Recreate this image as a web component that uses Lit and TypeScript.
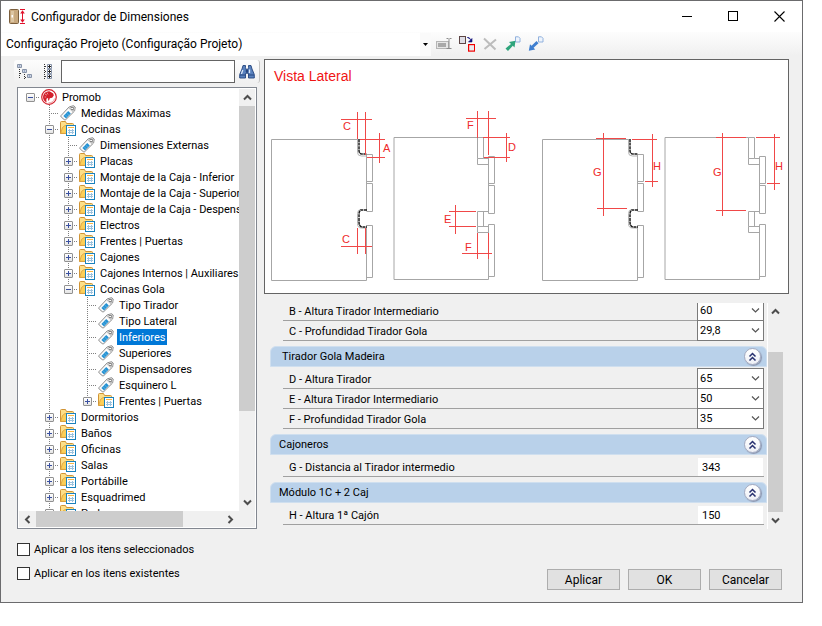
import { LitElement, html, css, svg, nothing } from "lit";
import { customElement, property } from "lit/decorators.js";
import { classMap } from "lit/directives/class-map.js";

interface Node {
  text: string;
  icon: "root" | "tag" | "folder";
  level: number;
  open?: boolean;
  guides: string;
  selected?: boolean;
}

/* guides: one letter per column. "|" line passes, " " empty, "t" leaf joint,
   "e" last joint, "r" root joint */
const NODES: Node[] = [
  { text: "Promob", icon: "root", level: 0, open: true, guides: "r" },
  { text: "Medidas Máximas", icon: "tag", level: 1, guides: " t" },
  { text: "Cocinas", icon: "folder", level: 1, open: true, guides: " t" },
  { text: "Dimensiones Externas", icon: "tag", level: 2, guides: " |t" },
  { text: "Placas", icon: "folder", level: 2, open: false, guides: " |t" },
  { text: "Montaje de la Caja - Inferior", icon: "folder", level: 2, open: false, guides: " |t" },
  { text: "Montaje de la Caja - Superior", icon: "folder", level: 2, open: false, guides: " |t" },
  { text: "Montaje de la Caja - Despensero", icon: "folder", level: 2, open: false, guides: " |t" },
  { text: "Electros", icon: "folder", level: 2, open: false, guides: " |t" },
  { text: "Frentes | Puertas", icon: "folder", level: 2, open: false, guides: " |t" },
  { text: "Cajones", icon: "folder", level: 2, open: false, guides: " |t" },
  { text: "Cajones Internos | Auxiliares", icon: "folder", level: 2, open: false, guides: " |t" },
  { text: "Cocinas Gola", icon: "folder", level: 2, open: true, guides: " |e" },
  { text: "Tipo Tirador", icon: "tag", level: 3, guides: " | t" },
  { text: "Tipo Lateral", icon: "tag", level: 3, guides: " | t" },
  { text: "Inferiores", icon: "tag", level: 3, guides: " | t", selected: true },
  { text: "Superiores", icon: "tag", level: 3, guides: " | t" },
  { text: "Dispensadores", icon: "tag", level: 3, guides: " | t" },
  { text: "Esquinero L", icon: "tag", level: 3, guides: " | t" },
  { text: "Frentes | Puertas", icon: "folder", level: 3, open: false, guides: " | e" },
  { text: "Dormitorios", icon: "folder", level: 1, open: false, guides: " t" },
  { text: "Baños", icon: "folder", level: 1, open: false, guides: " t" },
  { text: "Oficinas", icon: "folder", level: 1, open: false, guides: " t" },
  { text: "Salas", icon: "folder", level: 1, open: false, guides: " t" },
  { text: "Portábille", icon: "folder", level: 1, open: false, guides: " t" },
  { text: "Esquadrimed", icon: "folder", level: 1, open: false, guides: " t" },
  { text: "Pedra", icon: "folder", level: 1, open: false, guides: " t" },
];

const rootIcon = html`<svg width="16" height="16" viewBox="0 0 16 16" aria-hidden="true">
  <circle cx="8" cy="8" r="7.3" fill="#fff" stroke="#d3202c" stroke-width="1.2"/>
  <path d="M8.200 2.200A6 6 0 0 0 2 8a6 6 0 0 0 3.600 5.400Q4.800 10.400 6 9l1.200.4-.2 2 1 .2.800-2.400 2.400-.4 1.600-2.400-.6-2L9.800 3z" fill="#d3202c"/>
  <path d="M4 5l2 1.200M6 3.600l1 1.800M3.600 8h1.600" stroke="#fff" stroke-width=".5"/>
  <path d="M13.600 9.500A6 6 0 0 1 7.500 13.800" fill="none" stroke="#e8868c" stroke-width=".8"/>
</svg>`;

const tagIcon = html`<svg width="16" height="16" viewBox="0 0 16 16" aria-hidden="true">
  <path d="M1 10.600 9.200 1.900 13.600.700 15.200 2 14.600 6 5.800 14.600Q5 15.300 4.200 14.600L1.200 12Q.500 11.300 1 10.600z" fill="#fbfbfb" stroke="#8a8a8a" stroke-width="1"/>
  <path d="M9.600 2.200 13.600 1.200 14.800 2.200 14.200 5.800 12.800 7.200 8.600 3.200z" fill="#c2c2c2"/>
  <rect x="11.400" y="2.600" width="1.800" height="1.800" fill="#fff" stroke="#707070" stroke-width=".8"/>
  <path d="M3.400 11 8.200 6 10.800 8.600 6 13.400z" fill="#2491d2"/>
  <path d="M5 9.600 7.400 12M6.600 8 9 10.400" stroke="#7cc4ec" stroke-width=".6"/>
</svg>`;

const folderIcon = html`<svg width="16" height="16" viewBox="0 0 16 16" aria-hidden="true">
  <path d="M.500 12.500V1.500Q.500.500 1.500.500H5.500L6.500 2.500H12.500Q13.500 2.500 13.500 3.500V12.500z" fill="#fddf88" stroke="#d09436" stroke-width="1"/>
  <path d="M.700 12.300 2.500 6.500 5 4.500H13.500V12.500z" fill="#fccf58" stroke="#d9a040" stroke-width=".8"/>
  <rect x="6.500" y="4.500" width="9" height="10" fill="#fff" stroke="#1a82bd" stroke-width="1"/>
  <rect x="8" y="6" width="6" height="1" fill="#f9b744"/>
  <path d="M8 9.500H14M8 11.500H14M9.500 8V13M12.500 8V13" stroke="#9cc3de" stroke-width="1"/>
</svg>`;

const arrow = (d: string) =>
  html`<svg width="9" height="9" viewBox="0 0 9 9" aria-hidden="true"><path d=${d} fill="none" stroke="#4d4d4d" stroke-width="2"/></svg>`;
const UP = "M1 6.500 4.500 3 8 6.500";
const DOWN = "M1 2.500 4.500 6 8 2.500";
const LEFT = "M6.500 1 3 4.500 6.500 8";
const RIGHT = "M2.500 1 6 4.500 2.500 8";

@customElement("scroll-bar")
class ScrollBar extends LitElement {
  @property() dir = "v";
  @property({ type: Number }) before = 0;
  @property({ type: Number }) size = 80;
  @property({ type: Number }) after = 20;
  static styles = css`
    :host { display: flex; background: #f0f0f0; min-width: 0; min-height: 0; }
    :host([dir="v"]) { flex-direction: column; }
    :host([dir="h"]) { height: 16px; }
    button { flex: 0 0 17px; border: 0; padding: 0; background: none; display: grid; place-items: center; }
    .track { flex: 1; display: flex; flex-direction: inherit; min-height: 0; min-width: 0; }
    .thumb { background: #cdcdcd; }
  `;
  render() {
    const v = this.dir === "v";
    return html`
      <button aria-label=${v ? "Subir" : "Izquierda"}>${arrow(v ? UP : LEFT)}</button>
      <div class="track">
        <div style="flex:${this.before} 1 0"></div>
        <div class="thumb" style="flex:${this.size} 1 0"></div>
        <div style="flex:${this.after} 1 0"></div>
      </div>
      <button aria-label=${v ? "Bajar" : "Derecha"}>${arrow(v ? DOWN : RIGHT)}</button>
    `;
  }
}

@customElement("tree-view")
class TreeView extends LitElement {
  static styles = css`
    :host {
      display: grid; grid-template: minmax(0, 1fr) 16px / minmax(0, 1fr) 16px;
      border: 1px solid #828790; padding: 1px; background: #fff; min-height: 0;
    }
    .rows { overflow: hidden; padding-left: 2px; }
    .row { display: flex; height: 16px; white-space: nowrap; }
    .cell { flex: 0 0 19px; height: 16px; position: relative; }
    .cell svg { display: block; }
    .box {
      position: absolute; left: 5px; top: 4px; width: 9px; height: 9px; padding: 0;
      border: 1px solid #919191; border-radius: 1px; background: linear-gradient(#fff, #e4e4e4);
    }
    .box::before, .box.plus::after { content: ""; position: absolute; background: #3a50a0; }
    .box::before { left: 1px; top: 3px; width: 5px; height: 1px; }
    .box.plus::after { left: 3px; top: 1px; width: 1px; height: 5px; }
    .icon { flex: 0 0 16px; margin: 0 3px 0 1px; }
    .icon svg { display: block; }
    .label { padding: 1px 2px 0; line-height: 15px; }
    .selected { background: #0078d7; color: #fff; }
    .corner { background: #f0f0f0; }
  `;
  cell(kind: string, box: boolean, open?: boolean) {
    const vertical = kind === "|" || kind === "t" ? "M9.500 0V16" : kind === "e" ? "M9.500 0V8" : "";
    const horizontal = "ter".includes(kind) ? "M9 8.500H19" : "";
    return html`<div class="cell">
      <svg width="19" height="16" aria-hidden="true">
        <path d="${vertical} ${horizontal}" stroke="#808080" stroke-dasharray="1 1" fill="none" shape-rendering="crispEdges"/>
      </svg>
      ${box ? html`<button class=${classMap({ box: true, plus: !open })} aria-label=${open ? "Contraer" : "Expandir"}></button>` : nothing}
    </div>`;
  }
  render() {
    return html`
      <div class="rows" role="tree">
        ${NODES.map((n) => {
          const cells = [...n.guides];
          return html`<div class="row" role="treeitem" aria-level=${n.level + 1} aria-selected=${n.selected ? "true" : "false"}>
            ${cells.map((g, i) => this.cell(g, i === cells.length - 1 && n.open !== undefined, n.open))}
            <span class="icon">${n.icon === "root" ? rootIcon : n.icon === "tag" ? tagIcon : folderIcon}</span>
            <span class=${classMap({ label: true, selected: !!n.selected })}>${n.text}</span>
          </div>`;
        })}
      </div>
      <scroll-bar dir="v" before="0" size="78.500" after="21.500"></scroll-bar>
      <scroll-bar dir="h" before="0" size="79" after="21"></scroll-bar>
      <div class="corner"></div>
    `;
  }
}

@customElement("side-view")
class SideView extends LitElement {
  static styles = css`
    :host { display: block; border: 1px solid #646464; background: #fff; }
    .drawing { display: block; width: 100%; height: auto; font-family: "Liberation Sans", Arial, sans-serif; }
    .gray { fill: none; stroke: #a6a6a6; }
    .red { fill: none; stroke: #f04848; }
    .letter { fill: #ee2a2a; font-size: 11px; }
    .title { fill: #f01414; font-size: 14px; }
    .shell { fill: none; stroke: #b4b4b4; stroke-width: 1; }
    .dark { fill: none; stroke: #1c1c1c; stroke-width: 1.500; stroke-dasharray: 3 .6; }
  `;
  gola() {
    return svg`
      <path class="gray" d="M366.500 280.500H271.500V139.500H358M366.500 154.500V211M366.500 225V280.500M366.500 154.500h6v27h-6M366.500 183.500h6v28h-6M366.500 225.500h6v52h-6"/>
      <path class="shell" d="M357.500 139v13.500q0 3.500 4 3.500h5M361 209.500q-3.500 0-3.500 4v10q0 4.500 4 4.500h5"/>
      <path class="dark" d="M359 139v12q.500 3 3 3h5M367 210h-6q-2 1-2 4v8q0 4.500 3 5h5"/>`;
  }
  wood() {
    return svg`
      <path class="gray" d="M488.500 164.500V211.500M477.500 137.500H394V279.500H488.500V226M477.500 137.500h6v21h-6zM483.500 158.500h5M477.500 158.500v6h11v-6M488.500 156.500h6v27h-6zM488.500 185.500h6v28h-6zM488.500 224.500h6v52h-6zM477.500 211.500h11M477.500 211.500v15h11M483.500 211.500v15M477.500 226.500v6h11"/>`;
  }
  render() {
    return html`<svg class="drawing" viewBox="265 60 523 233" role="img" aria-label="Vista Lateral">
      <text class="title" x="274" y="81">Vista Lateral</text>
      ${this.gola()}
      <g transform="translate(271 0)">${this.gola()}</g>
      ${this.wood()}
      <g transform="translate(271 0)">${this.wood()}</g>
      <path class="red" d="M357.500 112v27M365.500 112v43M341 119.500h31M379.500 133v30M360 139.500h25M367 157.500h18M357.500 228v26M365.500 228v26M341 246.500h31"/>
      <path class="red" d="M477.500 111v27M488.500 111v44M466 118.500h30M506.500 133v29M483 137.500h27M484 157.500h26M455.500 205v29M449 211.500h27M449 226.500h27M477.500 233v26M488.500 233v26M462 253.500h30"/>
      <path class="red" d="M603.500 133v83M596 138.500h30M597 208.500h30M652.500 134v53M632 139.500h25M645 181.500h13"/>
      <path class="red" d="M722.500 133v83M716 137.500h30M716 210.500h30M774.500 134v56M756 137.500h24M767 183.500h13"/>
      <g class="letter">
        <text x="343" y="130">C</text><text x="383" y="152">A</text><text x="342" y="243">C</text>
        <text x="467" y="129">F</text><text x="508" y="151">D</text><text x="444" y="223">E</text><text x="465" y="251">F</text>
        <text x="593" y="176">G</text><text x="653" y="170">H</text><text x="713" y="176">G</text><text x="775" y="170">H</text>
      </g>
    </svg>`;
  }
}

interface Field { id: string; label: string; value: string; list: boolean; }
interface Group { title: string; nested?: boolean; fields: Field[]; }

const GROUPS: Group[] = [
  { title: "", fields: [
    { id: "b", label: "B - Altura Tirador Intermediario", value: "60", list: true },
    { id: "c", label: "C - Profundidad Tirador Gola", value: "29,8", list: true } ] },
  { title: "Tirador Gola Madeira", nested: true, fields: [
    { id: "d", label: "D - Altura Tirador", value: "65", list: true },
    { id: "e", label: "E - Altura Tirador Intermediario", value: "50", list: true },
    { id: "f", label: "F - Profundidad Tirador Gola", value: "35", list: true } ] },
  { title: "Cajoneros", fields: [{ id: "g", label: "G - Distancia al Tirador intermedio", value: "343", list: false }] },
  { title: "Módulo 1C + 2 Caj", fields: [{ id: "h", label: "H - Altura 1ª Cajón", value: "150", list: false }] },
];

@customElement("property-panel")
class PropertyPanel extends LitElement {
  static styles = css`
    * { box-sizing: border-box; }
    :host { display: grid; grid-template-columns: minmax(0, 1fr) 16px; min-height: 0; overflow: hidden; }
    .list { overflow: hidden; min-height: 0; }
    .group { margin-bottom: 5px; }
    .group:first-child { margin-top: -2px; }
    .head {
      display: flex; align-items: center; justify-content: space-between; height: 21px; margin-bottom: 2px;
      padding: 0 5px 0 8px; background: #b9d1ea; border: 1px solid #cfdfef; border-radius: 6px 6px 0 0;
    }
    .nested { padding-left: 11px; }
    h2 { font: inherit; margin: 0; }
    .fold {
      width: 17px; height: 17px; padding: 0; border: 1px solid #a5abc0; border-radius: 50%;
      background: linear-gradient(#fff, #eef0f6); display: grid; place-items: center; box-shadow: 1px 1px 1px #8a94ad;
    }
    .fold svg { display: block; }
    .row {
      display: flex; align-items: center; height: 20px; margin: 0 3px 0 13px; padding-left: 6px;
      border-bottom: 1px solid #a0a0a0;
    }
    label { flex: 1; padding-top: 2px; line-height: 17px; }
    .combo { position: relative; flex: 0 0 67px; height: 21px; }
    select {
      width: 100%; height: 100%; appearance: none; border: 1px solid #7a7a7a; border-radius: 0; background: #fff;
      font: inherit; padding: 0 2px 1px; color: #000; display: block;
    }
    .combo svg { position: absolute; right: 4px; top: 6px; pointer-events: none; }
    .text { flex: 0 0 65px; height: 18px; width: 65px; border: 0; margin-right: 1px; padding: 1px 4px 0; background: #fff; font: inherit; color: #000; }
    scroll-bar { border-left: 1px solid #fff; }
  `;
  render() {
    return html`
      <div class="list">
        ${GROUPS.map((g) => html`<section class="group">
          ${g.title ? html`<div class=${classMap({ head: true, nested: !!g.nested })}>
            <h2>${g.title}</h2>
            <button class="fold" aria-label="Contraer ${g.title}">
              <svg width="9" height="9" viewBox="0 0 9 9"><path d="M1.500 4.500 4.500 1.500 7.500 4.500M1.500 8.500 4.500 5.500 7.500 8.500" fill="none" stroke="#27306f" stroke-width="1.500"/></svg>
            </button></div>` : nothing}
          ${g.fields.map((f) => html`<div class="row">
            <label for=${f.id}>${f.label}</label>
            ${f.list
              ? html`<span class="combo"><select id=${f.id}><option>${f.value}</option></select>
                  <svg width="9" height="9" viewBox="0 0 9 9"><path d=${DOWN} fill="none" stroke="#555" stroke-width="1.200"/></svg></span>`
              : html`<input class="text" id=${f.id} .value=${f.value}>`}
          </div>`)}
        </section>`)}
      </div>
      <scroll-bar dir="v" before="16.700" size="83.300" after="0"></scroll-bar>
    `;
  }
}

@customElement("app-root")
class AppRoot extends LitElement {
  static styles = css`
    * { box-sizing: border-box; }
    :host {
      display: flex; box-sizing: border-box; height: 100vh; padding: 0 19px 23px 0; background: #fff;
      font: 11px "Roboto", sans-serif; color: #000;
    }
    button { font: inherit; color: inherit; }
    .window { flex: 1; min-width: 0; display: flex; flex-direction: column; border: 1px solid #6b6b6d; background: #f0f0f0; }
    .titlebar { flex: 0 0 31px; display: flex; align-items: center; background: #fff; padding-left: 8px; }
    h1 { flex: 1; margin: 0 0 0 5px; font: 12px "Roboto", sans-serif; }
    .caption { width: 46px; height: 30px; border: 0; padding: 0; background: none; display: grid; place-items: center; }
    .project { flex: 0 0 24px; display: flex; align-items: center; background: linear-gradient(#fdfdfd, #f0f0f0); }
    .pick { position: relative; flex: 0 0 430px; height: 23px; }
    .pick select {
      width: 100%; height: 100%; appearance: none; border: 0; background: #fff; padding: 0 12px 0 5px;
      font: 12px "Roboto", sans-serif; color: #000;
    }
    .drop { position: absolute; right: 0; top: 0; width: 11px; height: 23px; background: #fafafa; display: grid; place-items: center; pointer-events: none; }
    .tools { display: flex; gap: 7px; padding-left: 5px; }
    .tool { width: 16px; height: 16px; padding: 0; border: 0; background: none; }
    .tool svg { display: block; }
    .body { flex: 1; min-height: 0; display: grid; grid-template-columns: 246px minmax(0, 1fr); gap: 4px; padding: 3px 13px 0 13px; }
    .left { display: flex; flex-direction: column; gap: 4px; padding-top: 1px; min-height: 0; }
    .search {
      flex: 0 0 23px; display: flex; align-items: center; border-radius: 3px; padding: 0 4px 0 3px;
      background: linear-gradient(#fdfdfd, #f0f0f0); border-right: 1px solid #c4c4c4;
    }
    .pair { display: flex; gap: 7px; }
    .search input { flex: 1; min-width: 0; height: 23px; border: 1px solid #646464; background: #fff; padding: 0 3px; font: inherit; margin: 0 4px 0 5px; }
    tree-view { flex: 1; margin: 0 3px; }
    .right { display: flex; flex-direction: column; gap: 9px; min-height: 0; }
    property-panel { flex: 1; margin: 0 6px; }
    .footer { flex: 0 0 auto; display: flex; justify-content: space-between; align-items: flex-end; padding: 8px 20px 12px 16px; }
    .checks { display: flex; flex-direction: column; padding-bottom: 5px; }
    .checks label { display: flex; align-items: center; gap: 4px; height: 24px; }
    .checks input { appearance: none; width: 13px; height: 13px; margin: 0; border: 1px solid #333; background: #fff; }
    .actions { display: flex; gap: 8px; }
    .actions button { width: 73px; height: 21px; padding: 0; border: 1px solid #adadad; background: #e1e1e1; font-size: 12px; }
  `;
  render() {
    return html`<div class="window">
      <header class="titlebar">
        <svg width="17" height="16" viewBox="0 0 17 16" aria-hidden="true">
          <rect x=".5" y=".5" width="9" height="14" rx="1" fill="#c8a97f" stroke="#7b5e3c"/>
          <path d="M2 2H5V13H2z" fill="#dcc5a2"/><rect x="2.500" y="6" width="1.500" height="2.500" fill="#fff"/>
          <path d="M11 .500H16M11 14.500H16M13.500 2V13" stroke="#e0112b"/>
          <path d="M11.200 4.500 13.500 1.200 15.800 4.500zM11.200 10.500 13.500 13.800 15.800 10.500z" fill="#e0112b"/>
        </svg>
        <h1>Configurador de Dimensiones</h1>
        <button class="caption" aria-label="Minimizar"><svg width="11" height="11"><path d="M0 5.500H10" stroke="#000"/></svg></button>
        <button class="caption" aria-label="Maximizar"><svg width="11" height="11"><rect x=".5" y=".5" width="9" height="9" fill="none" stroke="#000"/></svg></button>
        <button class="caption" aria-label="Cerrar"><svg width="11" height="11"><path d="M.5.5 10.500 10.500M10.500.5.5 10.500" stroke="#000" stroke-width="1.100"/></svg></button>
      </header>
      <div class="project">
        <div class="pick">
          <select aria-label="Proyecto"><option>Configuração Projeto (Configuração Projeto)</option></select>
          <span class="drop"><svg width="5" height="3"><path d="M0 0H5L2.500 3z" fill="#000"/></svg></span>
        </div>
        <div class="tools">
          <button class="tool" aria-label="Renombrar"><svg width="16" height="16" viewBox="0 0 16 16">
            <rect x=".5" y="5.500" width="12" height="7" fill="#e6e6e6" stroke="#b5b5b5"/><rect x="2" y="7" width="8" height="4" fill="#a9a9a9"/>
            <path d="M10.500 2.500H12.500M13.500 2.500H15.500M13 3V12M10.500 12.500H15.500" stroke="#8c8c8c" fill="none"/></svg></button>
          <button class="tool" aria-label="Copiar"><svg width="16" height="16" viewBox="0 0 16 16">
            <rect x=".5" y=".5" width="6" height="7" fill="#dedee6" stroke="#5d4545"/>
            <path d="M8 1.500h2l2 2.500M13 2.500V6H9.500z" fill="#10107c" stroke="#10107c" stroke-width=".6"/>
            <rect x="9.600" y="8.600" width="6" height="6.500" fill="#ebebf0" stroke="#f00000" stroke-width="1.200"/></svg></button>
          <button class="tool" aria-label="Eliminar"><svg width="16" height="16" viewBox="0 0 16 16">
            <path d="M2 2.500 13.500 13.500M14 3.500 2.500 13" stroke="#bcbcbc" stroke-width="2"/></svg></button>
          <button class="tool" aria-label="Importar"><svg width="16" height="16" viewBox="0 0 16 16">
            <path d="M10.500.800h3l1.500 1.500v3.700h-4.500z" fill="#eef4fc" stroke="#86a9da" stroke-width=".9"/>
            <path d="M.500 12.500 6 8 4 6 10.500 4.800 9.500 11.500 7.800 9.800 3 15z" fill="#2fa57c"/></svg></button>
          <button class="tool" aria-label="Exportar"><svg width="16" height="16" viewBox="0 0 16 16">
            <path d="M10.500.800h3l1.500 1.500v3.700h-4.500z" fill="#eef4fc" stroke="#86a9da" stroke-width=".9"/>
            <path d="M.800 14.800 2 8.200 3.600 9.800 8.500 5 10.500 7.200 5.600 11.800 7.200 13.600z" fill="#3f7fd0"/></svg></button>
        </div>
      </div>
      <main class="body">
        <div class="left">
          <div class="search">
            <div class="pair">
              <button class="tool" aria-label="Expandir todo"><svg width="16" height="16" viewBox="0 0 16 16">
                <path d="M2.500 5V15M3 9.500H5M7.500 10V15M8 13.500H10" stroke="#333" stroke-dasharray="1 1" fill="none"/>
                <path d="M.500.500h4v3h-4zM5.500 5.500h4v3h-4zM10.500 10.500h4v3h-4z" fill="#fff" stroke="#8793a8"/>
                <path d="M1.500 2h2M6.500 7h2M11.500 12h2" stroke="#33508c"/></svg></button>
              <button class="tool" aria-label="Contraer todo"><svg width="16" height="16" viewBox="0 0 16 16">
                <path d="M4.500 0V16M5 2.500H8M5 7.500H8M5 12.500H8" stroke="#333" stroke-dasharray="1 1" fill="none"/>
                <path d="M7.500.500h4v4h-4zM7.500 5.500h4v4h-4zM7.500 10.500h4v4h-4z" fill="#fff" stroke="#8793a8"/>
                <path d="M8 2.500h3M9.500 1v3M8 7.500h3M9.500 6v3M8 12.500h3M9.500 11v3" stroke="#222"/></svg></button>
            </div>
            <input type="text" aria-label="Buscar">
            <button class="tool" aria-label="Buscar"><svg width="16" height="16" viewBox="0 0 16 16">
              <path d="M4 1.500h2.500v2L7.500 6v3.500H6.500V14H.700V10.500L3 5z" fill="#5a82be" stroke="#25457f" stroke-width=".9"/>
              <path d="M12 1.500H9.500v2L8.500 6v3.500h1V14h5.800V10.500L13 5z" fill="#5a82be" stroke="#25457f" stroke-width=".9"/>
              <path d="M3.800 6 2.400 10M10.500 5.500V9" stroke="#dbe7f8" stroke-width="1.300"/>
              <path d="M1 11H6.500M9.500 11H15" stroke="#25457f"/>
              <path d="M6.800 5.500h2.400v2.500H6.800z" fill="#25457f"/></svg></button>
          </div>
          <tree-view></tree-view>
        </div>
        <div class="right">
          <side-view></side-view>
          <property-panel></property-panel>
        </div>
      </main>
      <footer class="footer">
        <div class="checks">
          <label><input type="checkbox">Aplicar a los itens seleccionados</label>
          <label><input type="checkbox">Aplicar en los itens existentes</label>
        </div>
        <div class="actions"><button>Aplicar</button><button>OK</button><button>Cancelar</button></div>
      </footer>
    </div>`;
  }
}
